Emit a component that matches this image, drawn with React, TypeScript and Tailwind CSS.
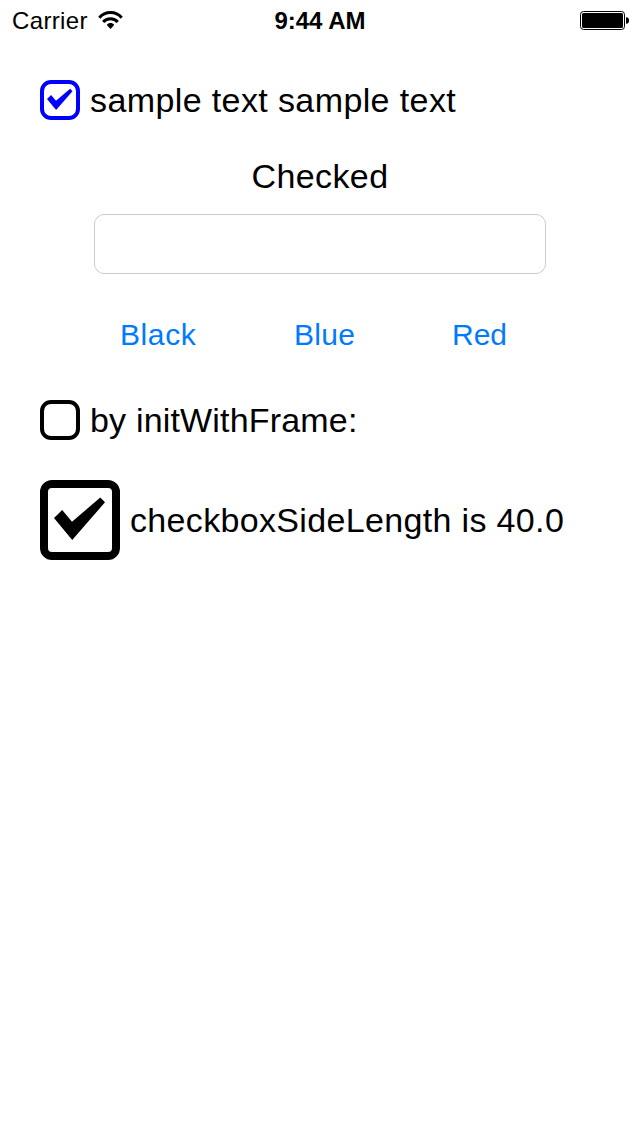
import { useState } from "react";

type CheckboxProps = {
  label: string;
  initial?: boolean;
  large?: boolean;
  color?: string;
  spacing: string;
};

function Checkbox({ label, initial = false, large = false, color = "text-black", spacing }: CheckboxProps) {
  const [checked, setChecked] = useState(initial);
  const box = large ? "size-20 rounded-[12px] border-8" : "size-10 rounded-[11px] border-4";
  return (
    <button
      type="button"
      role="checkbox"
      aria-checked={checked}
      onClick={() => setChecked(!checked)}
      className="ml-10 flex items-center gap-2.5 text-left"
    >
      <span className={`${box} ${color} block shrink-0 border-current`}>
        {checked && (
          <svg viewBox="8 8 64 64" className="block size-full" fill="currentColor">
            <path d="M14 38L22.2 30L32 41.7L60.3 17.5L65 22.3L32.2 60Z" />
          </svg>
        )}
      </span>
      <span className={`text-[34px] leading-10 whitespace-nowrap ${spacing}`}>{label}</span>
    </button>
  );
}

function StatusBar() {
  return (
    <header className="grid h-10 grid-cols-3 items-center pr-[11px] pl-3 text-[24px] leading-[38px]">
      <div className="flex items-center gap-2.5">
        <span className="pt-0.5 tracking-[0.35px]">Carrier</span>
        <svg viewBox="0 0 25 20" className="h-5 w-[25px]" fill="none" stroke="black" strokeWidth="3">
          <path d="M1.3 7.7a14.7 14.7 0 0 1 22.4 0" />
          <path d="M5.2 12a9.9 9.9 0 0 1 14.6 0" />
          <path d="M8.8 15c1-1.3 2.2-1.9 3.7-1.9s2.7.6 3.7 1.9L12.5 19Z" fill="black" stroke="none" />
        </svg>
      </div>
      <span className="pt-0.5 pr-px text-center font-bold">9:44 AM</span>
      <svg viewBox="0 0 49 20" className="h-5 w-[49px] justify-self-end">
        <rect x="0.5" y="1.5" width="44" height="18" rx="3" fill="none" stroke="black" />
        <rect x="2" y="3" width="41" height="15" rx="1.5" />
        <path d="M46 7.2c2.6 0 3 1.4 3 3.3s-.4 3.3-3 3.3Z" />
      </svg>
    </header>
  );
}

export default function App() {
  return (
    <main className="flex h-[1136px] w-[640px] flex-col bg-white font-['Liberation_Sans',Arial,sans-serif] text-black">
      <StatusBar />
      <div className="mt-10 flex">
        <Checkbox label="sample text sample text" initial color="text-[#0000ff]" spacing="tracking-[0.39px]" />
      </div>
      <p className="mt-9 text-center text-[34px] leading-10 tracking-[0.4px]">Checked</p>
      <input
        type="text"
        aria-label="Text"
        className="mt-[18px] ml-[94px] h-[60px] w-[452px] rounded-[10px] border border-[#cccccc] px-3.5 text-[28px] outline-none"
      />
      <div className="mt-[41px] ml-[120px] flex h-10 text-[30px] leading-10 text-[#007aff]">
        <button type="button" className="w-[174px] text-left tracking-[0.6px]">Black</button>
        <button type="button" className="w-[158px] text-left tracking-[0.3px]">Blue</button>
        <button type="button" className="text-left">Red</button>
      </div>
      <div className="mt-[45px] flex">
        <Checkbox label="by initWithFrame:" spacing="tracking-[0.18px]" />
      </div>
      <div className="mt-10 flex">
        <Checkbox label="checkboxSideLength is 40.0" initial large spacing="tracking-[0.34px]" />
      </div>
    </main>
  );
}
